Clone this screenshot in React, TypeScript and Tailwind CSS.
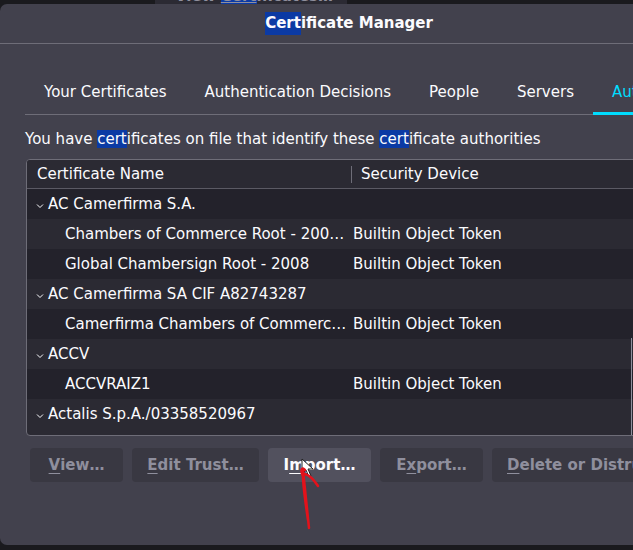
import React from "react";

const FONT = "font-['DejaVu_Sans',sans-serif]";

type Row = { name: string; device?: string; group?: boolean };

const ROWS: Row[] = [
  { name: "AC Camerfirma S.A.", group: true },
  { name: "Chambers of Commerce Root - 200…", device: "Builtin Object Token" },
  { name: "Global Chambersign Root - 2008", device: "Builtin Object Token" },
  { name: "AC Camerfirma SA CIF A82743287", group: true },
  { name: "Camerfirma Chambers of Commerc…", device: "Builtin Object Token" },
  { name: "ACCV", group: true },
  { name: "ACCVRAIZ1", device: "Builtin Object Token" },
  { name: "Actalis S.p.A./03358520967", group: true },
];

const TABS = ["Your Certificates", "Authentication Decisions", "People", "Servers", "Authorities"];

function Chevron() {
  return (
    <svg width="8" height="6" viewBox="0 0 8 6" fill="none" stroke="#fbfbfe" strokeWidth="1" className="mr-[4px] mt-[4px] shrink-0">
      <polyline points="1,1.5 4,4.5 7,1.5" />
    </svg>
  );
}

function Hl({ children }: { children: React.ReactNode }) {
  return <span className="bg-[#0b3aa4]">{children}</span>;
}

function Btn({ pre, key_, post, active, w, left }: { pre: string; key_: string; post: string; active?: boolean; w: string; left?: boolean }) {
  return (
    <div
      className={`${w} h-[34px] shrink-0 rounded-[4px] flex items-center font-semibold text-[15px] whitespace-nowrap ${
        left ? "justify-start pl-[15px]" : "justify-center"
      } ${active ? "bg-[#52515e] text-[#fbfbfe]" : "bg-[#393842] text-[#8f8f9d]"}`}
    >
      {pre}
      <span className="underline underline-offset-[3px]">{key_}</span>
      {post}
    </div>
  );
}

export default function App() {
  return (
    <div className={`w-[633px] h-[550px] bg-[#1a1a1e] overflow-hidden relative ${FONT}`}>
      {/* window behind */}
      <div className="h-[4px] overflow-hidden flex">
        <div className="ml-[155px] w-[192px] h-[4px] bg-[#2b2a33] overflow-hidden">
          <div className="-mt-[12px] pl-[20px] text-[15px] font-semibold text-[#8f8f9d] leading-[16px] whitespace-nowrap">
            View <span className="bg-[#0b3aa4] underline">Cert</span>ificates…
          </div>
        </div>
      </div>

      {/* dialog */}
      <div className="w-[698px] h-[541px] bg-[#42414d] rounded-tl-[7px] rounded-bl-[7px] text-[#fbfbfe] flex flex-col">
        <div className="h-[40px] flex items-center justify-center border-b border-[#6e6d78] font-bold text-[15px]">
          <Hl>Cert</Hl>ificate Manager
        </div>

        <div className="pl-[25px] flex flex-col">
          <div className="mt-[26px] flex h-[45px] border-b border-[#6e6d78]">
            {TABS.map((t, i) => (
              <div
                key={t}
                className={`px-[19px] flex items-center text-[15px] whitespace-nowrap ${
                  i === 4 ? "text-[#00ddff] border-b-[3px] border-[#00ddff] -mb-[1px] pt-[3px]" : ""
                }`}
              >
                {t}
              </div>
            ))}
          </div>

          <div className="mt-[15px] text-[15px] leading-[18px] whitespace-nowrap">
            You have <Hl>cert</Hl>ificates on file that identify these <Hl>cert</Hl>ificate authorities
          </div>

          <div className="mt-[11px] ml-[1px] h-[277px] border border-[#6e6d78] rounded-[4px] bg-[#2b2a33] overflow-hidden relative">
            <div className="h-[29px] flex items-center border-b border-[#5b5a64] bg-[#2b2a33] text-[15px]">
              <div className="w-[325px] pl-[10px] border-r border-[#6e6d78] leading-[17px]">Certificate Name</div>
              <div className="pl-[9px]">Security Device</div>
            </div>
            {ROWS.map((r, i) => (
              <div
                key={r.name}
                className={`h-[30px] flex items-center text-[15px] whitespace-nowrap ${i % 2 === 0 ? "bg-[#23222b]" : "bg-[#2b2a33]"}`}
              >
                {r.group ? (
                  <div className="pl-[9px] flex items-center">
                    <Chevron />
                    {r.name}
                  </div>
                ) : (
                  <>
                    <div className="w-[326px] pl-[38px] overflow-hidden">{r.name}</div>
                    <div>{r.device}</div>
                  </>
                )}
              </div>
            ))}
            <div className="absolute left-[604px] top-[178px] w-[1px] h-[98px] bg-[#8f8f9d]" />
          </div>

          <div className="mt-[12px] ml-[5px] flex gap-[9px]">
            <Btn w="w-[93px]" pre="" key_="V" post="iew…" />
            <Btn w="w-[127px]" pre="" key_="E" post="dit Trust…" />
            <Btn w="w-[103px]" pre="I" key_="m" post="port…" active />
            <Btn w="w-[103px]" pre="E" key_="x" post="port…" />
            <Btn w="w-[190px]" pre="" key_="D" post="elete or Distrust…" left />
          </div>
        </div>
      </div>

      {/* cursor and hand-drawn arrow */}
      <svg className="absolute left-0 top-0 pointer-events-none" width="633" height="550">
        <path d="M302 459 L302 474 L306 470 L309 477 L311 476 L308 469 L313 469 Z" fill="#ffffff" stroke="#222" strokeWidth="1" />
        <g stroke="#e3121b" strokeWidth="2.5" fill="none" strokeLinecap="round" strokeLinejoin="round">
          <path d="M309 528 C307 510 305 490 303 470 C302 480 305 500 308 520" />
          <path d="M303 476 C300 470 302 466 305 470" />
          <path d="M305 474 C309 475 314 480 318 486" />
        </g>
      </svg>
    </div>
  );
}
